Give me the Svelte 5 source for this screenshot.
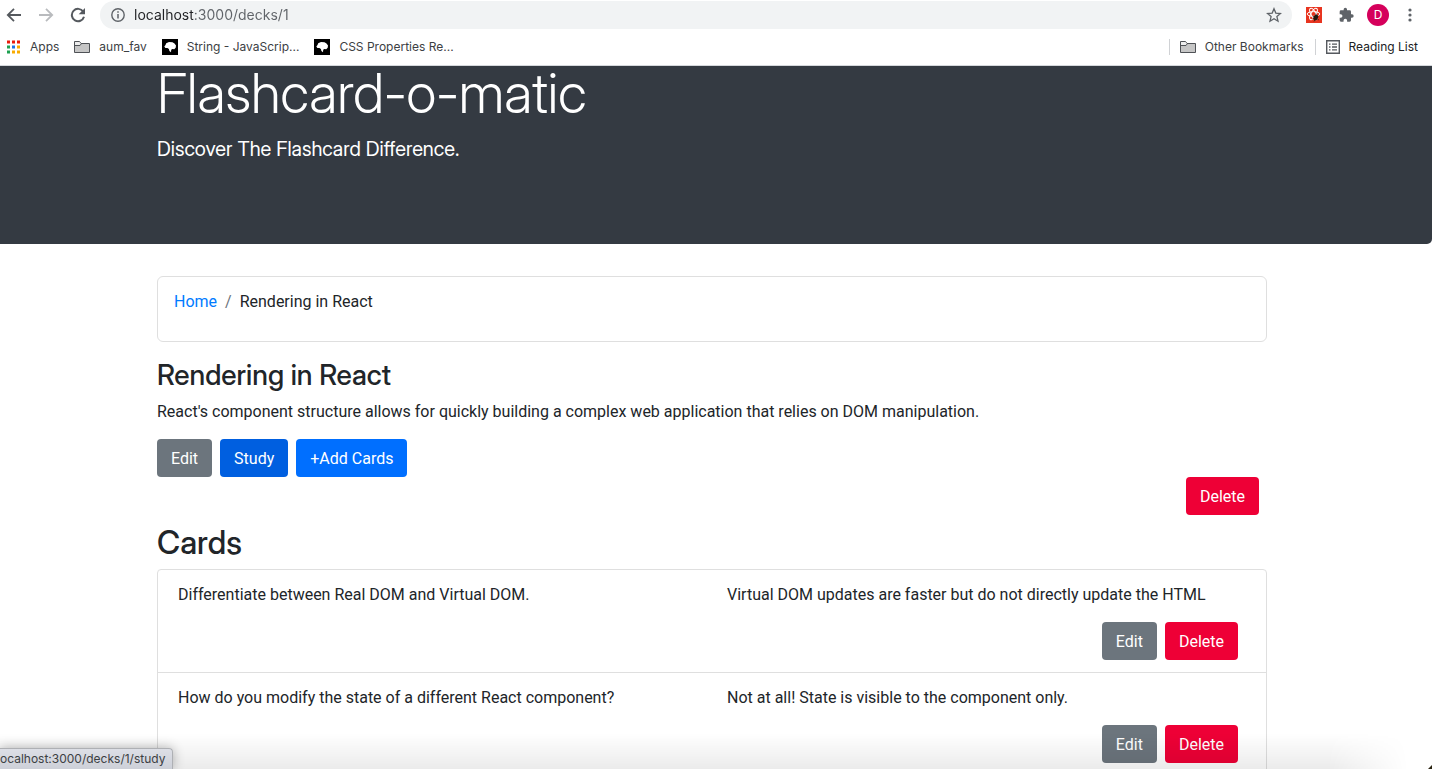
<script>
  const bookmarks = [
    { label: 'Apps', icon: 'apps' },
    { label: 'aum_fav', icon: 'folder' },
    { label: 'String - JavaScrip...', icon: 'mdn' },
    { label: 'CSS Properties Re...', icon: 'mdn' }
  ];
  const appColors = ['#ea1c0d', '#ea1c0d', '#ea1c0d', '#1da050', '#1a73e8', '#f9ab00', '#1da050', '#f9ab00', '#f9ab00'];
  const deck = {
    name: 'Rendering in React',
    description: "React's component structure allows for quickly building a complex web application that relies on DOM manipulation.",
    cards: [
      {
        front: 'Differentiate between Real DOM and Virtual DOM.',
        back: 'Virtual DOM updates are faster but do not directly update the HTML'
      },
      {
        front: 'How do you modify the state of a different React component?',
        back: 'Not at all! State is visible to the component only.'
      }
    ]
  };
  let url = $state('localhost:3000/decks/1');
</script>

{#snippet folder()}
  <svg width="16" height="14" viewBox="0 0 16 14" aria-hidden="true">
    <path d="M.5 12.5v-11h5l1.5 2h8.500v9z" fill="#c6c6c6" stroke="#4f5256" />
    <path d="M1 2h4.300l1.500 2L5.500 5H1z" fill="#eee" />
    <path d="M.5 5.500H6l1.500-2" fill="none" stroke="#4f5256" />
  </svg>
{/snippet}

<div class="window">
  <header class="chrome">
    <div class="toolbar">
      <button class="icon" aria-label="Back">
        <svg width="16" height="16" viewBox="0 0 16 16" fill="none" stroke="#55595e" stroke-width="1.800"><path d="M15 8H2M8 1.800 1.800 8 8 14.200" /></svg>
      </button>
      <button class="icon" aria-label="Forward" disabled>
        <svg width="16" height="16" viewBox="0 0 16 16" fill="none" stroke="#b9bbbe" stroke-width="1.800"><path d="M1 8h13M8 1.800 14.200 8 8 14.200" /></svg>
      </button>
      <button class="icon" aria-label="Reload">
        <svg width="16" height="16" viewBox="0 0 16 16"><path d="M13.200 4.600A6.200 6.200 0 1 0 14 9.800" fill="none" stroke="#55595e" stroke-width="2" /><path d="M15 1v6.300H8.700z" fill="#55595e" /></svg>
      </button>
      <div class="address">
        <svg width="14" height="14" viewBox="0 0 14 14" aria-hidden="true"><circle cx="7" cy="7" r="6.200" fill="none" stroke="#5f6368" stroke-width="1.400" /><path d="M7 6v4.500M7 3.300v1.500" stroke="#5f6368" stroke-width="1.500" /></svg>
        <input type="text" aria-label="Address" bind:value={url} />
        <button class="icon" aria-label="Bookmark this page">
          <svg width="16" height="16" viewBox="0 0 16 16"><path d="m8 1.700 1.800 4.400 4.700.4-3.600 3.100 1.100 4.600L8 11.700l-4 2.500 1.100-4.600L1.500 6.500l4.700-.4z" fill="none" stroke="#5f6368" stroke-width="1.300" /></svg>
        </button>
      </div>
      <div class="extensions">
        <button class="icon" aria-label="React extension">
          <svg width="16" height="16" viewBox="0 0 16 16"><path fill="#e8341f" d="M0 0h16v16H0z" /><g fill="none" stroke="#fff" stroke-width="1"><ellipse cx="7.500" cy="7" rx="6.300" ry="2.400" /><ellipse cx="7.500" cy="7" rx="6.300" ry="2.400" transform="rotate(60 7.500 7)" /><ellipse cx="7.500" cy="7" rx="6.300" ry="2.400" transform="rotate(120 7.500 7)" /></g><ellipse cx="9.800" cy="10.500" rx="2.200" ry="3" fill="#21170f" transform="rotate(25 9.800 10.500)" /><path d="m6.500 9 6.500 4M6.500 12l6-3M10 6.500v2M8 14.500l1-2" stroke="#21170f" stroke-width=".7" /></svg>
        </button>
        <button class="icon" aria-label="Extensions">
          <svg width="16" height="16" viewBox="0 0 24 24"><path fill="#5f6368" d="M21 11h-1.500V7a2 2 0 0 0-2-2h-4V3.500a2.500 2.500 0 0 0-5 0V5h-4a2 2 0 0 0-2 2v3.800H4a2.700 2.700 0 0 1 0 5.400H2.500V20a2 2 0 0 0 2 2h3.800v-1.500a2.700 2.700 0 0 1 5.400 0V22h3.800a2 2 0 0 0 2-2v-4H21a2.500 2.500 0 0 0 0-5z" /></svg>
        </button>
        <button class="avatar" aria-label="Profile D">D</button>
        <button class="icon" aria-label="Menu">
          <svg width="16" height="16" viewBox="0 0 16 16" fill="#5f6368"><circle cx="8" cy="3" r="1.600" /><circle cx="8" cy="8" r="1.600" /><circle cx="8" cy="13" r="1.600" /></svg>
        </button>
      </div>
    </div>
    <nav class="bookmarks" aria-label="Bookmarks">
      {#each bookmarks as mark}
        <a href="#bookmark">
          {#if mark.icon === 'apps'}
            <svg width="14" height="14" viewBox="0 0 14 14" aria-hidden="true">
              {#each appColors as color, i}
                <rect x={(i % 3) * 5} y={Math.floor(i / 3) * 5 + 0.5} width="3" height="3" fill={color} />
              {/each}
            </svg>
          {:else if mark.icon === 'folder'}
            {@render folder()}
          {:else}
            <svg width="16" height="16" viewBox="0 0 16 16" aria-hidden="true"><path d="M0 0h16v16H0z" /><path fill="#fff" d="M2.300 7.500 3.500 6l.7-1.700L7 3l3.500.3 2 1.300L14 6.500l-.3 2.300-1.500 1.400-1.800-.2-1.200.8-.2 2.500-1.600-1.200-.5-2-1.500-1.100-2 .1z" /></svg>
          {/if}
          <span>{mark.label}</span>
        </a>
      {/each}
      <div class="saved">
        <a href="#other">{@render folder()}<span>Other Bookmarks</span></a>
        <a href="#reading" class="reading">
          <svg width="14" height="14" viewBox="0 0 14 14" aria-hidden="true"><path d="M.7.700h12.600v12.600H.7z" fill="none" stroke="#55595e" stroke-width="1.400" /><path d="M3 4.200h1.500M3 7h1.500M3 9.800h1.500M6 4.200h5M6 7h5M6 9.800h5" stroke="#55595e" stroke-width="1.300" /></svg>
          <span>Reading List</span>
        </a>
      </div>
    </nav>
  </header>

  <div class="page">
    <div class="jumbotron">
      <div class="container">
        <h1>Flashcard-o-matic</h1>
        <p>Discover The Flashcard Difference.</p>
      </div>
    </div>
    <main class="container">
      <nav class="breadcrumb" aria-label="Breadcrumb">
        <a href="#home">Home</a><span class="slash">/</span><span>{deck.name}</span>
      </nav>
      <h3>{deck.name}</h3>
      <p class="description">{deck.description}</p>
      <div class="actions">
        <button class="btn gray">Edit</button>
        <button class="btn blue hovered">Study</button>
        <button class="btn blue">+Add Cards</button>
      </div>
      <div class="actions end">
        <button class="btn red">Delete</button>
      </div>
      <h2>Cards</h2>
      <ul>
        {#each deck.cards as card}
          <li>
            <p>{card.front}</p>
            <div>
              <p>{card.back}</p>
              <div class="actions end">
                <button class="btn gray">Edit</button>
                <button class="btn red">Delete</button>
              </div>
            </div>
          </li>
        {/each}
      </ul>
    </main>
  </div>
  <div class="fade"></div>
  <svg class="corner" width="4" height="4" viewBox="0 0 4 4" aria-hidden="true"><path d="M4 0v4H0z" fill="#2b2412" /></svg>
  <div class="status">ocalhost:3000/decks/1/study</div>
</div>

<style>
  :global(body) { margin: 0; }
  .window {
    position: relative;
    display: flex;
    flex-direction: column;
    height: 100vh;
    overflow: hidden;
    background: #fff;
    color: #212529;
    font: 16px/24px Roboto, sans-serif;
  }
  .window :global(svg) { display: block; flex: none; }
  h1, h2, h3, p, ul { margin: 0; padding: 0; }
  h1, h2, h3, .jumbotron p { font-family: "Inter Display", Inter, sans-serif; }
  button { font: inherit; border: 0; cursor: pointer; }
  .icon { display: block; padding: 0; background: none; }
  .chrome { flex: none; border-bottom: 1px solid #d5d8dc; font-family: Inter, sans-serif; }
  .toolbar { display: flex; align-items: center; gap: 16px; padding: 1px 14px 0 6px; }
  .address {
    display: flex;
    flex: 1;
    align-items: center;
    gap: 9px;
    height: 28px;
    margin-left: -2px;
    padding: 0 10px 0 11px;
    border-radius: 14px;
    background: #f1f3f4;
  }
  .address input {
    flex: 1;
    min-width: 0;
    padding: 0;
    border: 0;
    outline: 0;
    background: linear-gradient(90deg, #202124 59px, #5f6368 59px);
    background-clip: text;
    color: transparent;
    font: 14px/20px Inter, sans-serif;
  }
  .extensions { display: flex; align-items: center; gap: 16px; margin-left: -2px; }
  .extensions .avatar { margin: 0 -3px; }
  .avatar { width: 22px; height: 22px; padding: 0; border-radius: 50%; background: #d5005b; color: #fff; font-size: 12px; line-height: 22px; }
  .bookmarks { display: flex; align-items: center; gap: 15px; height: 36px; padding: 0 14px 0 7px; font-size: 12px; line-height: 18px; }
  .bookmarks a { display: flex; align-items: center; gap: 9px; color: #3c4043; text-decoration: none; white-space: nowrap; }
  .saved { display: flex; gap: 11px; margin-left: auto; }
  .saved a { height: 16px; padding-left: 10px; border-left: 1px solid #d0d2d5; }
  .saved .reading { color: #202124; }
  .page { flex: 1; min-height: 0; }
  .jumbotron { box-sizing: border-box; min-height: 178px; margin-bottom: 32px; border-radius: 0 0 5px 0; background: #343a42; color: #fff; }
  .container { box-sizing: border-box; max-width: 1118px; margin: 0 auto; padding-right: 8px; }
  h1 { font-size: 55px; line-height: 55px; font-weight: 300; }
  .jumbotron p { margin-top: 13px; font-size: 20px; line-height: 30px; font-weight: 400; }
  .breadcrumb { min-height: 38px; margin-bottom: 16px; padding: 13px 16px; border: 1px solid #dfdfdf; border-radius: 6px; }
  .breadcrumb a { color: #007bff; text-decoration: none; }
  .slash { padding: 0 8px; color: #6c757d; }
  h3 { font-size: 28px; line-height: 34px; font-weight: 500; }
  .description { margin: 8px 0 15px; }
  .actions { display: flex; gap: 8px; }
  .end { justify-content: flex-end; padding-right: 8px; }
  .btn { height: 38px; padding: 1px 14px 0; border-radius: 4px; color: #fff; }
  .gray { background: #6c757d; }
  .blue { background: #006fff; }
  .hovered { background: #005fe0; }
  .red { background: #ee0036; }
  h2 { margin: 9px 0 7px; font-size: 32px; line-height: 38px; font-weight: 500; }
  ul { list-style: none; border: 1px solid #dfdfdf; border-radius: 4px; }
  li { display: grid; grid-template-columns: 1fr 1fr; column-gap: 30px; padding: 13px 20px 12px; border-bottom: 1px solid #dfdfdf; }
  li .actions { margin-top: 15px; }
  .fade { position: absolute; inset: auto 24px 0 0; height: 36px; background: linear-gradient(transparent, rgba(0, 0, 0, 0.08)); mask-image: linear-gradient(to left, transparent, #000 80px); pointer-events: none; }
  .corner { position: absolute; right: 0; bottom: 0; }
  .status {
    position: absolute;
    left: 0;
    bottom: 0;
    padding-right: 7px;
    border: 1px solid #aeb0b4;
    border-width: 1px 1px 0 0;
    border-radius: 0 4px 0 0;
    background: linear-gradient(#dddfe6, #cdd0d8);
    box-shadow: 0 0 12px rgba(0, 0, 0, 0.3);
    color: #3c4043;
    font: 12px/20px Inter, sans-serif;
  }
</style>
